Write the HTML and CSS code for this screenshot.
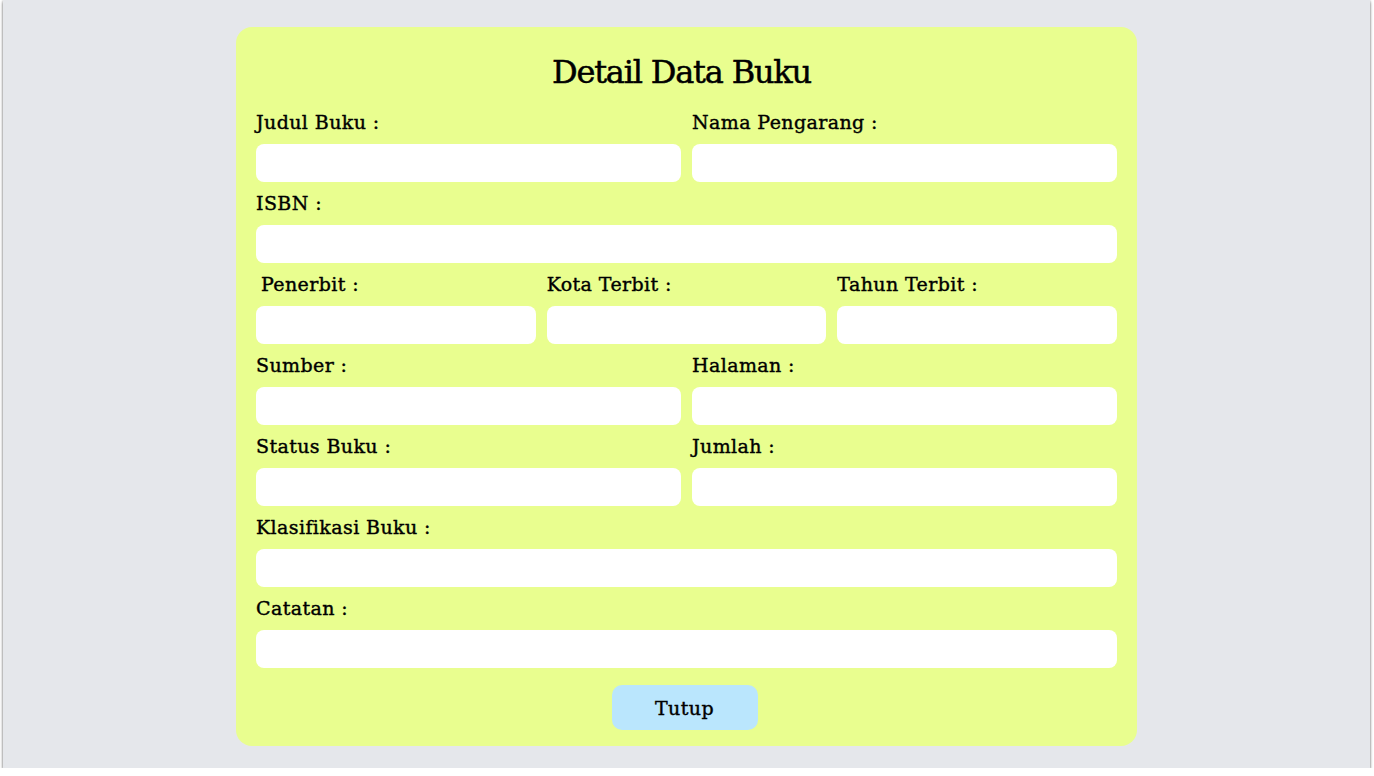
FILE: index.html
```html
<!DOCTYPE html>
<html lang="id">
<head>
<meta charset="utf-8">
<title>Detail Data Buku</title>
<link rel="stylesheet" href="styles.css">
</head>
<body>
<div class="frame">
  <div class="card">
    <h1 class="title">Detail Data Buku</h1>
    <div class="row cols-2">
      <div class="field"><label class="label">Judul Buku :</label><div class="input"></div></div>
      <div class="field"><label class="label">Nama Pengarang :</label><div class="input"></div></div>
    </div>
    <div class="row">
      <div class="field"><label class="label">ISBN :</label><div class="input"></div></div>
    </div>
    <div class="row cols-3">
      <div class="field"><label class="label indent">Penerbit :</label><div class="input"></div></div>
      <div class="field"><label class="label">Kota Terbit :</label><div class="input"></div></div>
      <div class="field"><label class="label">Tahun Terbit :</label><div class="input"></div></div>
    </div>
    <div class="row cols-2">
      <div class="field"><label class="label">Sumber :</label><div class="input"></div></div>
      <div class="field"><label class="label">Halaman :</label><div class="input"></div></div>
    </div>
    <div class="row cols-2">
      <div class="field"><label class="label">Status Buku :</label><div class="input"></div></div>
      <div class="field"><label class="label">Jumlah :</label><div class="input"></div></div>
    </div>
    <div class="row">
      <div class="field"><label class="label">Klasifikasi Buku :</label><div class="input"></div></div>
    </div>
    <div class="row">
      <div class="field"><label class="label">Catatan :</label><div class="input"></div></div>
    </div>
    <div class="actions">
      <button class="btn" type="button">Tutup</button>
    </div>
  </div>
</div>
</body>
</html>
```

FILE: styles.css
```css
* { box-sizing: border-box; }
html, body { margin: 0; padding: 0; background: #ffffff; }
body { font-family: "DejaVu Serif", "Liberation Serif", serif; color: #000; }

.frame {
  margin: 0 4px 0 3px;
  height: 768px;
  background: #e5e7eb;
  box-shadow: 0 2px 3px rgba(0,0,0,0.5), 0 0 2px rgba(0,0,0,0.25);
  padding-top: 27px;
}

.card {
  width: 901px;
  margin: 0 auto;
  background: #e9fe8f;
  border-radius: 16px;
  padding: 25px 20px 16px;
}

.title {
  margin: 0 0 17px;
  font-size: 32px;
  font-weight: normal;
  letter-spacing: -1.2px;
  -webkit-text-stroke: 0.5px #000;
  text-align: center;
  line-height: 40px;
  padding-right: 10px;
}

.row { display: grid; grid-template-columns: 1fr; column-gap: 11px; margin-bottom: 8px; }
.cols-2 { grid-template-columns: 1fr 1fr; }
.cols-3 { grid-template-columns: 1fr 1fr 1fr; }

.field { display: flex; flex-direction: column; gap: 8px; }
.label {
  font-size: 19px;
  line-height: 27px;
  letter-spacing: 0.4px;
  -webkit-text-stroke: 0.4px #000;
}
.indent { padding-left: 5px; }

.input {
  height: 38px;
  background: #ffffff;
  border-radius: 8px;
}

.actions { display: flex; justify-content: center; padding-top: 9px; padding-right: 4px; }
.btn {
  width: 146px;
  height: 45px;
  border: none;
  border-radius: 10px;
  background: #bae6fd;
  font-family: inherit;
  font-size: 19px;
  letter-spacing: 0.4px;
  -webkit-text-stroke: 0.4px #000;
  color: #000;
}
```
